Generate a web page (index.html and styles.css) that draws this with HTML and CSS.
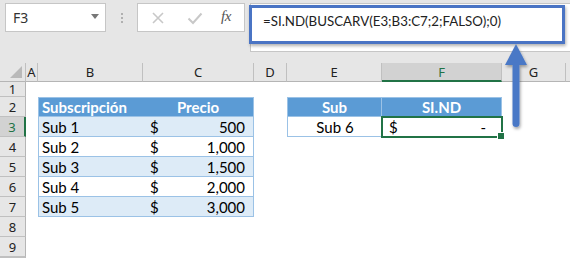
FILE: index.html
```html
<!DOCTYPE html>
<html>
<head>
<meta charset="utf-8">
<link rel="stylesheet" href="styles.css">
</head>
<body>
<div class="app">
  <div class="toolbar">
    <div class="namebox"><span class="nb-text">F3</span><span class="caret"></span></div>
    <div class="dots"><i></i><i></i><i></i></div>
    <div class="btnbox">
      <svg class="ico" width="14" height="14" viewBox="0 0 14 14"><path d="M2 2 L12 12 M12 2 L2 12" stroke="#c8c8c8" stroke-width="1.6" fill="none"/></svg>
      <svg class="ico" width="16" height="14" viewBox="0 0 16 14"><path d="M1.5 7.5 L6 12 L14.5 2.5" stroke="#c8c8c8" stroke-width="2" fill="none"/></svg>
      <span class="fx">fx</span>
    </div>
    <div class="formula">=SI.ND(BUSCARV(E3;B3:C7;2;FALSO);0)</div>
  </div>

  <div class="sheet">
    <!-- header row -->
    <div class="ch corner"><span class="tri"></span></div>
    <div class="ch">A</div>
    <div class="ch">B</div>
    <div class="ch">C</div>
    <div class="ch">D</div>
    <div class="ch">E</div>
    <div class="ch sel-col">F</div>
    <div class="ch">G</div>
    <div class="ch last"></div>

    <!-- row 1 -->
    <div class="rh">1</div>
    <div class="c"></div><div class="c"></div><div class="c"></div><div class="c"></div><div class="c"></div><div class="c"></div><div class="c"></div><div class="c"></div>

    <!-- row 2 -->
    <div class="rh">2</div>
    <div class="c"></div>
    <div class="c t-head t-l t-top">Subscripción</div>
    <div class="c t-head t-r t-top center">Precio</div>
    <div class="c"></div>
    <div class="c t-head t-l t-top center sep">Sub</div>
    <div class="c t-head t-r t-top center">SI.ND</div>
    <div class="c"></div><div class="c"></div>

    <!-- row 3 -->
    <div class="rh sel-row">3</div>
    <div class="c"></div>
    <div class="c band t-l">Sub 1</div>
    <div class="c band t-r acc"><span>$</span><span>500</span></div>
    <div class="c"></div>
    <div class="c t-l t-bot center">Sub 6</div>
    <div class="c t-r t-bot acc sel"><span>$</span><span class="dash">-</span><span class="handle"></span></div>
    <div class="c"></div><div class="c"></div>

    <!-- row 4 -->
    <div class="rh">4</div>
    <div class="c"></div>
    <div class="c t-l">Sub 2</div>
    <div class="c t-r acc"><span>$</span><span>1,000</span></div>
    <div class="c"></div><div class="c"></div><div class="c"></div><div class="c"></div><div class="c"></div>

    <!-- row 5 -->
    <div class="rh">5</div>
    <div class="c"></div>
    <div class="c band t-l">Sub 3</div>
    <div class="c band t-r acc"><span>$</span><span>1,500</span></div>
    <div class="c"></div><div class="c"></div><div class="c"></div><div class="c"></div><div class="c"></div>

    <!-- row 6 -->
    <div class="rh">6</div>
    <div class="c"></div>
    <div class="c t-l">Sub 4</div>
    <div class="c t-r acc"><span>$</span><span>2,000</span></div>
    <div class="c"></div><div class="c"></div><div class="c"></div><div class="c"></div><div class="c"></div>

    <!-- row 7 -->
    <div class="rh">7</div>
    <div class="c"></div>
    <div class="c band t-l t-bot">Sub 5</div>
    <div class="c band t-r t-bot acc"><span>$</span><span>3,000</span></div>
    <div class="c"></div><div class="c"></div><div class="c"></div><div class="c"></div><div class="c"></div>

    <!-- row 8 -->
    <div class="rh">8</div>
    <div class="c"></div><div class="c"></div><div class="c"></div><div class="c"></div><div class="c"></div><div class="c"></div><div class="c"></div><div class="c"></div>

    <!-- row 9 -->
    <div class="rh">9</div>
    <div class="c"></div><div class="c"></div><div class="c"></div><div class="c"></div><div class="c"></div><div class="c"></div><div class="c"></div><div class="c"></div>

    <!-- row 10 (cut off by the window) -->
    <div class="rh"></div>
    <div class="c"></div><div class="c"></div><div class="c"></div><div class="c"></div><div class="c"></div><div class="c"></div><div class="c"></div><div class="c"></div>
  </div>

  <div class="annot-box"></div>
  <svg class="arrow" width="30" height="92" viewBox="0 0 30 92">
    <defs>
      <filter id="sh" x="-50%" y="-20%" width="200%" height="140%">
        <feDropShadow dx="1" dy="2" stdDeviation="1.5" flood-color="#000" flood-opacity="0.35"/>
      </filter>
    </defs>
    <g filter="url(#sh)">
      <polygon points="14,2 25,23 3,23" fill="#4a78c6"/>
      <rect x="10.5" y="20" width="7" height="65" rx="3.5" fill="#4a78c6"/>
    </g>
  </svg>
</div>
</body>
</html>
```

FILE: styles.css
```css
* { box-sizing: border-box; }
html, body { margin: 0; padding: 0; background: #fff; }
body { width: 570px; height: 259px; overflow: hidden; }

.app {
  position: relative;
  width: 570px;
  height: 259px;
  overflow: hidden;
  font-family: "Noto Sans", "Open Sans", sans-serif;
}

.toolbar {
  display: flex;
  align-items: flex-start;
  height: 63px;
  padding: 3px 0 0 5px;
  background: #e6e6e6;
}

.namebox {
  width: 101px;
  height: 29px;
  background: #fff;
  border: 1px solid #c6c6c6;
  display: flex;
  align-items: center;
  justify-content: space-between;
  padding: 0 6px 0 7px;
  font-size: 14px;
  color: #333;
}
.caret {
  width: 0; height: 0;
  border-left: 4px solid transparent;
  border-right: 4px solid transparent;
  border-top: 5px solid #777;
  margin-top: -3px;
}

.dots {
  width: 31px;
  height: 29px;
  display: flex;
  flex-direction: column;
  align-items: center;
  justify-content: center;
  gap: 2px;
}
.dots i {
  display: block;
  width: 2px;
  height: 2px;
  background: #b0b0b0;
}

.btnbox {
  width: 108px;
  height: 29px;
  background: #fff;
  border: 1px solid #c6c6c6;
  display: flex;
  align-items: center;
  padding: 0 8px 0 13px;
  gap: 0;
}
.btnbox .ico:first-child { margin-right: 22px; }
.btnbox .ico:nth-child(2) { margin-right: 18px; }
.fx {
  font-family: "Liberation Serif", "DejaVu Serif", serif;
  font-style: italic;
  font-size: 15px;
  letter-spacing: -0.5px;
  color: #555;
  margin-top: -2px;
}

.formula {
  flex: 1;
  height: 49px;
  margin-left: 5px;
  background: #fff;
  border: 1px solid #c6c6c6;
  border-right: none;
  padding: 9px 0 0 12px;
  font-family: "Lato", "Noto Sans", sans-serif;
  font-size: 13.3px;
  color: #222;
  white-space: nowrap;
}

.sheet {
  display: grid;
  grid-template-columns: 26px 12px 105px 111px 33px 95px 120px 64px 1fr;
  grid-template-rows: 19px 15px repeat(8, 20px);
  font-family: "Lato", "Liberation Sans", sans-serif;
  font-size: 15px;
  color: #000;
}

.ch {
  background: #e6e6e6;
  border-right: 1px solid #c0c0c0;
  border-bottom: 1px solid #b5b5b5;
  font-family: "Noto Sans", "Open Sans", sans-serif;
  font-size: 13px;
  color: #222;
  display: flex;
  align-items: center;
  justify-content: center;
}
.ch.last { border-right: none; }
.corner { position: relative; }
.tri {
  position: absolute;
  right: 3px;
  bottom: 3px;
  width: 0; height: 0;
  border-left: 12px solid transparent;
  border-bottom: 12px solid #b9b9b9;
}
.sel-col {
  background: #d2d2d2;
  border-bottom: 2px solid #217346;
  color: #217346;
}

.rh {
  background: #e6e6e6;
  border-right: 1px solid #b5b5b5;
  border-bottom: 1px solid #c0c0c0;
  font-family: "Noto Sans", "Open Sans", sans-serif;
  font-size: 13px;
  color: #222;
  display: flex;
  align-items: center;
  justify-content: center;
}
.sel-row {
  background: #d2d2d2;
  border-right: 2px solid #217346;
  color: #217346;
}

.c {
  display: flex;
  align-items: center;
  padding: 0 3px;
  white-space: nowrap;
  position: relative;
}
.center { justify-content: center; }

.t-head {
  background: #5b9bd5;
  color: #fff;
  font-weight: 700;
  border-bottom: 1px solid #9bc2e6;
}
.t-top { border-top: 1px solid #9bc2e6; }
.t-l { border-left: 1px solid #9bc2e6; }
.t-r { border-right: 1px solid #9bc2e6; }
.t-bot { border-bottom: 1px solid #9bc2e6; }
.band { background: #ddebf7; }
.band, .c.t-l:not(.t-head), .c.t-r:not(.t-head) { border-bottom: 1px solid #9bc2e6; }
.sep { border-right: 1px solid #9bc2e6; }

.acc {
  justify-content: space-between;
  padding: 0 8px 0 7px;
}

.sel {
  outline: 2px solid #217346;
  outline-offset: -1px;
  z-index: 2;
}
.sel .dash { margin-right: 7px; }
.handle {
  position: absolute;
  right: -4px;
  bottom: -4px;
  width: 6px;
  height: 6px;
  background: #217346;
  border: 1px solid #fff;
  box-sizing: content-box;
}

.annot-box {
  position: absolute;
  left: 249px;
  top: 5px;
  width: 316px;
  height: 39px;
  border: 3px solid #4a74c4;
  box-shadow: 1px 2px 3px rgba(0,0,0,0.3);
  pointer-events: none;
}

.arrow {
  position: absolute;
  left: 502px;
  top: 42px;
}
```
